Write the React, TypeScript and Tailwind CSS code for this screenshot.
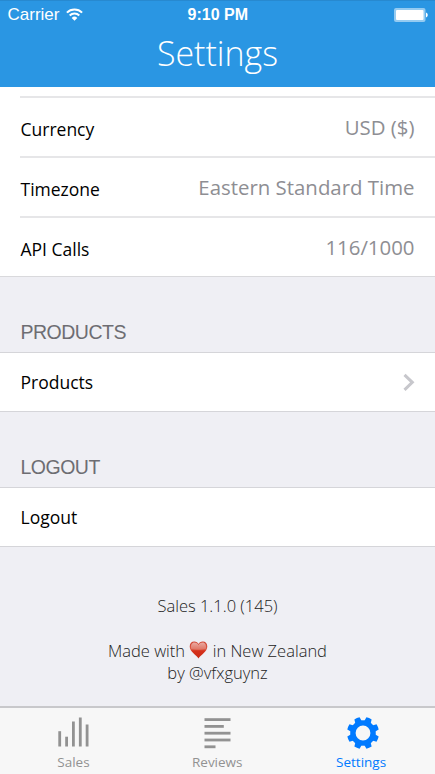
import type { ReactNode } from "react";

const details = [
    { label: "Currency", value: "USD ($)" },
    { label: "Timezone", value: "Eastern Standard Time" },
    { label: "API Calls", value: "116/1000" }
];

const GEAR_TEETH = [22.5, 67.5, 112.5, 157.5, 202.5, 247.5, 292.5, 337.5];

function WifiIcon() {
    return (
        <svg width="17" height="13" viewBox="0 0 17 13" fill="none" stroke="white" strokeWidth="2">
            <path d="M0.9 4.6a10.7 10.7 0 0 1 15.2 0" />
            <path d="M3.7 7.5a6.8 6.8 0 0 1 9.6 0" />
            <path d="M8.5 12.8L5.7 9.9a4 4 0 0 1 5.6 0z" fill="white" stroke="none" />
        </svg>
    );
}

function BatteryIcon() {
    return (
        <svg width="34" height="14" viewBox="0 0 34 14">
            <rect width="31.5" height="14" rx="2" fill="white" fillOpacity="0.5" />
            <rect x="2" y="2" width="27.5" height="10" rx="1" fill="white" />
            <path d="M32 4.5q1.8 0.8 1.8 2.5t-1.8 2.5z" fill="white" />
        </svg>
    );
}

function HeartIcon() {
    return (
        <svg className="inline-block align-[-2px]" width="19" height="18" viewBox="-0.5 0 19 18">
            <defs>
                <linearGradient id="heart" x1="0" y1="0" x2="0" y2="1">
                    <stop offset="0" stopColor="#d04432" />
                    <stop offset="0.45" stopColor="#da5a45" />
                    <stop offset="0.55" stopColor="#d6301b" />
                    <stop offset="1" stopColor="#c72b16" />
                </linearGradient>
                <linearGradient id="shine" x1="0" y1="0" x2="0" y2="1">
                    <stop offset="0" stopColor="#fff" stopOpacity="0.55" />
                    <stop offset="1" stopColor="#fff" stopOpacity="0.15" />
                </linearGradient>
            </defs>
            <path d="M9 17.6C7.3 14 0.2 10.8 0.2 5.4 0.2 2.4 2.2 0.6 4.7 0.6 6.8 0.6 8.4 1.6 9 3.1 9.6 1.6 11.2 0.6 13.3 0.6c2.5 0 4.5 1.8 4.5 4.8C17.8 10.8 10.7 14 9 17.6z" fill="url(#heart)" />
            <path d="M1.6 7.8C1 3.6 2.5 1.5 4.8 1.5 6.9 1.5 8.4 2.6 9 4.2 9.6 2.6 11.1 1.5 13.2 1.5c2.3 0 3.8 2.1 3.2 6.3-4 1.4-10.8 1.4-14.8 0z" fill="url(#shine)" />
        </svg>
    );
}

function SalesIcon() {
    return (
        <svg width="32" height="32" viewBox="0 0 32 32" fill="#929292">
            <rect x="0.3" y="14.2" width="2.8" height="15.3" />
            <rect x="7.2" y="19.7" width="2.8" height="9.8" />
            <rect x="14" y="4.5" width="2.8" height="25" />
            <rect x="20.9" y="0.5" width="2.8" height="29" />
            <rect x="27.7" y="7.5" width="2.8" height="22" />
        </svg>
    );
}

function ReviewsIcon() {
    return (
        <svg width="28" height="32" viewBox="0 0 28 32" fill="#929292">
            <rect x="0.5" y="1.2" width="26" height="2.8" />
            <rect x="0.5" y="8" width="19.3" height="2.8" />
            <rect x="0.5" y="14.8" width="26" height="2.8" />
            <rect x="0.5" y="21.6" width="26" height="2.8" />
            <rect x="0.5" y="28.4" width="11" height="2.8" />
        </svg>
    );
}

function GearIcon() {
    return (
        <svg width="34" height="32" viewBox="-18 -16 34 32">
            <circle r="10.1" fill="none" stroke="#007aff" strokeWidth="5.4" />
            {GEAR_TEETH.map((angle) => (
                <path key={angle} d="M-3.4 -11.5L-2.8 -15.8Q0 -16.3 2.8 -15.8L3.4 -11.5z" fill="#007aff" transform={`rotate(${angle})`} />
            ))}
        </svg>
    );
}

function SectionTitle({ children }: { children: ReactNode }) {
    return (
        <h2 className="flex h-[75px] items-end px-[20.5px] pb-[6px] font-['Liberation_Sans'] text-[19.5px] leading-[28px] tracking-[-0.5px] text-[#6d6d72]">
            {children}
        </h2>
    );
}

function Tab({ label, icon, className }: { label: string; icon: ReactNode; className: string }) {
    return (
        <button className={`flex flex-col items-center pt-[9px] text-[13.5px] leading-[18px] ${className}`}>
            <span className="mb-[4px] h-8 pl-[1.5px]">{icon}</span>
            {label}
        </button>
    );
}

export default function App() {
    return (
        <div className="flex h-[774px] w-[435px] flex-col overflow-hidden bg-[#efeff4] font-['Open_Sans',sans-serif] text-black">
            <header className="h-[87px] shrink-0 border-t border-[#2789d0] bg-[#2a96e3] text-white">
                <div className="grid h-[27px] grid-cols-3 items-center pl-[7.5px] pr-[7px] font-['Liberation_Sans'] text-[17px] leading-[27px]">
                    <div className="flex items-center gap-[7px]">
                        <span>Carrier</span>
                        <WifiIcon />
                    </div>
                    <div className="text-center text-[16px] font-bold">9:10 PM</div>
                    <div className="flex justify-end">
                        <BatteryIcon />
                    </div>
                </div>
                <h1 className="text-center text-[34px] font-light leading-[50px]">Settings</h1>
            </header>

            <main className="flex-1">
                <section className="border-b border-[#d9d9dc] bg-white pt-[9px]">
                    {details.map((item) => (
                        <div key={item.label} className="ml-5 flex h-[60px] items-center justify-between border-t-2 border-[#e6e6e8] pr-[20.5px]">
                            <span className="pl-[0.5px] pt-[5px] text-[17.5px]">{item.label}</span>
                            <span className="pb-px text-[20.4px] leading-[30px] text-[#8e8e93]">{item.value}</span>
                        </div>
                    ))}
                </section>

                <SectionTitle>PRODUCTS</SectionTitle>
                <section className="flex h-[60px] items-center justify-between border-y border-[#d5d5d9] bg-white pl-[20.5px] pr-5">
                    <span className="text-[17.5px]">Products</span>
                    <svg width="12" height="18" viewBox="0 0 12 18" fill="none" stroke="#c7c7cc" strokeWidth="3">
                        <path d="M1.5 1.8L9.3 9.3l-7.8 7.5" />
                    </svg>
                </section>

                <SectionTitle>LOGOUT</SectionTitle>
                <section className="flex h-[60px] items-center border-y border-[#d5d5d9] bg-white px-[20.5px]">
                    <span className="text-[17.5px]">Logout</span>
                </section>

                <footer className="pt-12 text-center text-[16.5px] font-light leading-[22px] text-[#222]">
                    <p>Sales 1.1.0 (145)</p>
                    <p className="mt-[23px]">
                        Made with <HeartIcon /> in New Zealand
                    </p>
                    <p>by @vfxguynz</p>
                </footer>
            </main>

            <nav className="grid h-[68px] shrink-0 grid-cols-3 border-t-2 border-[#c8c8cb] bg-[#f7f7f7] pl-[1.5px] pr-[2px]">
                <Tab label="Sales" icon={<SalesIcon />} className="text-[#929292]" />
                <Tab label="Reviews" icon={<ReviewsIcon />} className="text-[#929292]" />
                <Tab label="Settings" icon={<GearIcon />} className="text-[#007aff]" />
            </nav>
        </div>
    );
}
